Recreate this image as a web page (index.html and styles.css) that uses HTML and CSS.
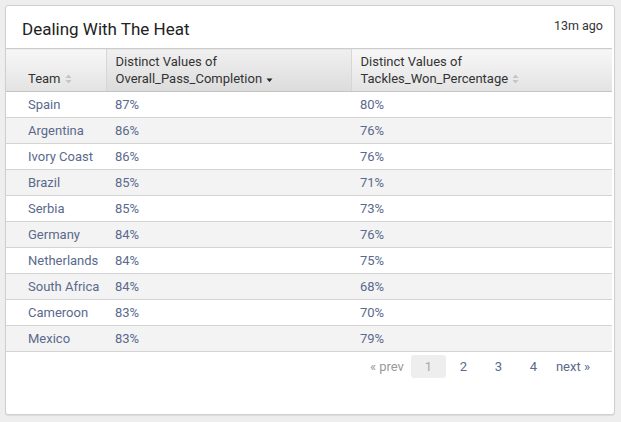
FILE: index.html
```html
<!DOCTYPE html>
<html>
<head>
<meta charset="utf-8">
<link rel="stylesheet" href="styles.css">
</head>
<body>
<div class="panel">
  <div class="panel-head">
    <h2 class="title">Dealing With The Heat</h2>
    <span class="ago">13m ago</span>
  </div>
  <table class="grid">
    <colgroup><col class="c1"><col class="c2"><col class="c3"></colgroup>
    <thead>
      <tr>
        <th><span class="lbl">Team</span><svg class="sort" width="7" height="10" viewBox="0 0 7 10"><path d="M0.5 4 L3.5 0.5 L6.5 4 Z M0.5 6 L3.5 9.5 L6.5 6 Z" fill="#c4c4c4"/></svg></th>
        <th class="sorted">Distinct Values of<br><span class="lbl">Overall_Pass_Completion</span><svg class="sort" width="7" height="10" viewBox="0 0 7 10"><path d="M0.5 4.5 L3.5 8 L6.5 4.5 Z" fill="#222"/></svg></th>
        <th>Distinct Values of<br><span class="lbl">Tackles_Won_Percentage</span><svg class="sort" width="7" height="10" viewBox="0 0 7 10"><path d="M0.5 4 L3.5 0.5 L6.5 4 Z M0.5 6 L3.5 9.5 L6.5 6 Z" fill="#c4c4c4"/></svg></th>
      </tr>
    </thead>
    <tbody>
      <tr><td>Spain</td><td>87%</td><td>80%</td></tr>
      <tr><td>Argentina</td><td>86%</td><td>76%</td></tr>
      <tr><td>Ivory Coast</td><td>86%</td><td>76%</td></tr>
      <tr><td>Brazil</td><td>85%</td><td>71%</td></tr>
      <tr><td>Serbia</td><td>85%</td><td>73%</td></tr>
      <tr><td>Germany</td><td>84%</td><td>76%</td></tr>
      <tr><td>Netherlands</td><td>84%</td><td>75%</td></tr>
      <tr><td>South Africa</td><td>84%</td><td>68%</td></tr>
      <tr><td>Cameroon</td><td>83%</td><td>70%</td></tr>
      <tr><td>Mexico</td><td>83%</td><td>79%</td></tr>
    </tbody>
  </table>
  <div class="pager">
    <span class="prev">« prev</span>
    <span class="pg active">1</span>
    <span class="pg">2</span>
    <span class="pg">3</span>
    <span class="pg">4</span>
    <span class="next">next »</span>
  </div>
</div>
</body>
</html>
```
FILE: styles.css
```css
html, body {
  margin: 0;
  padding: 0;
  background: #eeeeee;
}
body {
  padding: 5px;
  font-family: Roboto, "Liberation Sans", Arial, sans-serif;
  color: #333;
}
.panel {
  box-sizing: border-box;
  width: 610px;
  height: 410px;
  background: #fff;
  border: 1px solid #cfcfcf;
  border-radius: 3px;
  box-shadow: 0 1px 1px rgba(0,0,0,0.08);
}
.panel-head {
  display: flex;
  justify-content: space-between;
  align-items: flex-start;
  height: 42px;
  padding: 0 11px 0 16px;
}
.title {
  margin: 0;
  padding-top: 13px;
  font-size: 17px;
  font-weight: 400;
  color: #222;
  line-height: 20px;
}
.ago {
  padding-top: 12px;
  font-size: 12.5px;
  color: #333;
  line-height: 15px;
}
.grid {
  border-collapse: collapse;
  width: 606px;
  table-layout: fixed;
  font-size: 13px;
  white-space: nowrap;
}
.c1 { width: 100px; }
.c2 { width: 245px; }
.c3 { width: 261px; }
.grid th {
  text-align: left;
  vertical-align: bottom;
  font-weight: 400;
  color: #333;
  line-height: 17px;
  height: 43px;
  padding: 0 9px 4px 9px;
  box-sizing: border-box;
  background: linear-gradient(#f7f7f7, #e3e3e3);
  border-top: 1px solid #cccccc;
  border-bottom: 1px solid #c4c4c4;
  border-left: 1px solid #d6d6d6;
}
.grid th:first-child {
  padding-left: 22px;
  border-left: none;
}
.grid th.sorted {
  background: linear-gradient(#f0f0f0, #dcdcdc);
}
.sort {
  margin-left: 4px;
  vertical-align: -1px;
}
.grid td {
  height: 26px;
  padding: 0 9px;
  box-sizing: border-box;
  color: #5a6a8d;
  border-bottom: 1px solid #d4d4d4;
  line-height: 25px;
  overflow: visible;
}
.grid td:first-child {
  padding-left: 22px;
}
.grid tbody tr:nth-child(even) td {
  background: #f3f3f3;
}
.pager {
  display: flex;
  justify-content: flex-end;
  align-items: center;
  padding: 3px 24px 0 0;
  font-size: 13px;
  color: #5a6a8d;
}
.prev {
  color: #999;
  padding: 0 7px 0 0;
}
.pg {
  display: inline-block;
  width: 35px;
  height: 23px;
  line-height: 23px;
  text-align: center;
  border-radius: 3px;
}
.pg.active {
  background: #eeeeee;
  color: #aaa;
}
.next {
  padding-left: 5px;
}
```
